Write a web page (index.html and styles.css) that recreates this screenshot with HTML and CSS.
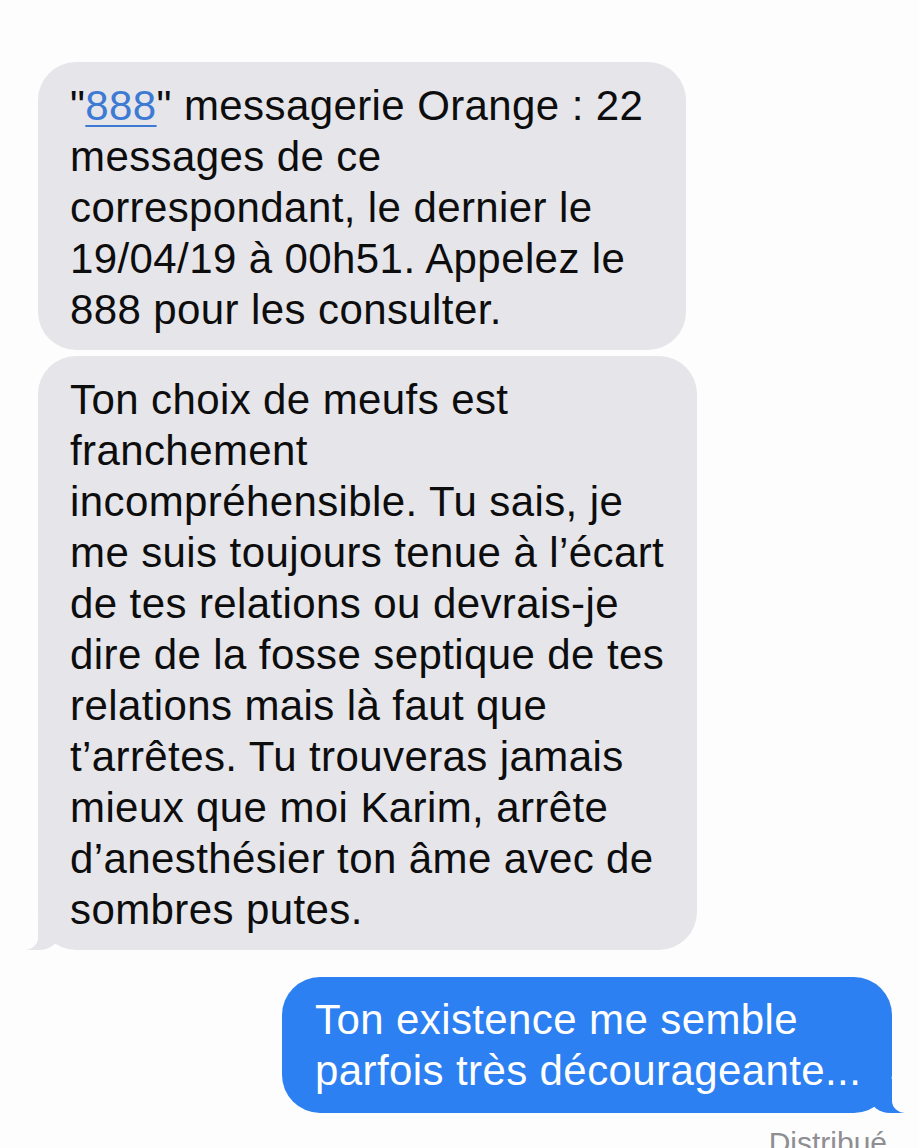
FILE: index.html
```html
<!DOCTYPE html>
<html lang="fr">
<head>
<meta charset="utf-8">
<link rel="stylesheet" href="styles.css">
</head>
<body>
<div class="thread">
  <div class="row in">
    <div class="bubble grey b1">"<span class="link">888</span>" messagerie Orange : 22<br>messages de ce<br>correspondant, le dernier le<br>19/04/19 à 00h51. Appelez le<br>888 pour les consulter.</div>
  </div>
  <div class="row in">
    <div class="bubble grey b2 tail-left">Ton choix de meufs est<br>franchement<br>incompréhensible. Tu sais, je<br>me suis toujours tenue à l’écart<br>de tes relations ou devrais-je<br>dire de la fosse septique de tes<br>relations mais là faut que<br>t’arrêtes. Tu trouveras jamais<br>mieux que moi Karim, arrête<br>d’anesthésier ton âme avec de<br>sombres putes.</div>
  </div>
  <div class="row out">
    <div class="bubble blue b3 tail-right">Ton existence me semble<br>parfois très décourageante...</div>
  </div>
  <div class="status">Distribué</div>
</div>
</body>
</html>
```
FILE: styles.css
```css
html, body {
  margin: 0;
  padding: 0;
  background: #fdfdfe;
}
body {
  width: 919px;
  height: 1148px;
  overflow: hidden;
  font-family: "Liberation Sans", Arial, sans-serif;
}
.thread {
  display: flex;
  flex-direction: column;
  padding: 62px 0 0 38px;
}
.row {
  display: flex;
}
.row.out {
  justify-content: flex-end;
  padding-right: 27px;
  margin-top: 27px;
}
.row + .row.in {
  margin-top: 6px;
}
.bubble {
  position: relative;
  box-sizing: border-box;
  font-size: 42px;
  letter-spacing: 0.4px;
  line-height: 51px;
  border-radius: 38px;
  white-space: nowrap;
}
.grey {
  background: #e5e5ea;
  color: #0d0d0d;
  padding: 18px 10px 15px 32px;
}
.b1 { width: 648px; }
.b2 { width: 659px; }
.blue {
  background: #2c80f2;
  color: #fff;
  padding: 17px 10px 17px 33px;
  width: 610px;
}
.link {
  color: #3d7ad3;
  text-decoration: underline;
  text-decoration-thickness: 2px;
  text-underline-offset: 5px;
}
.tail-left::before,
.tail-left::after,
.tail-right::before,
.tail-right::after {
  content: "";
  position: absolute;
  bottom: 0;
  height: 34px;
}
.tail-left::before {
  left: -13px;
  width: 34px;
  background: #e5e5ea;
  border-bottom-right-radius: 20px 16px;
}
.tail-left::after {
  left: -30px;
  width: 30px;
  background: #fdfdfe;
  border-bottom-right-radius: 14px 12px;
}
.tail-right::before {
  right: -12px;
  width: 34px;
  background: #2c80f2;
  border-bottom-left-radius: 20px 16px;
}
.tail-right::after {
  right: -30px;
  width: 30px;
  background: #fdfdfe;
  border-bottom-left-radius: 14px 12px;
}
.status {
  align-self: flex-end;
  margin-right: 32px;
  margin-top: 15px;
  font-size: 30px;
  color: #8e8e93;
  line-height: 30px;
}
```
